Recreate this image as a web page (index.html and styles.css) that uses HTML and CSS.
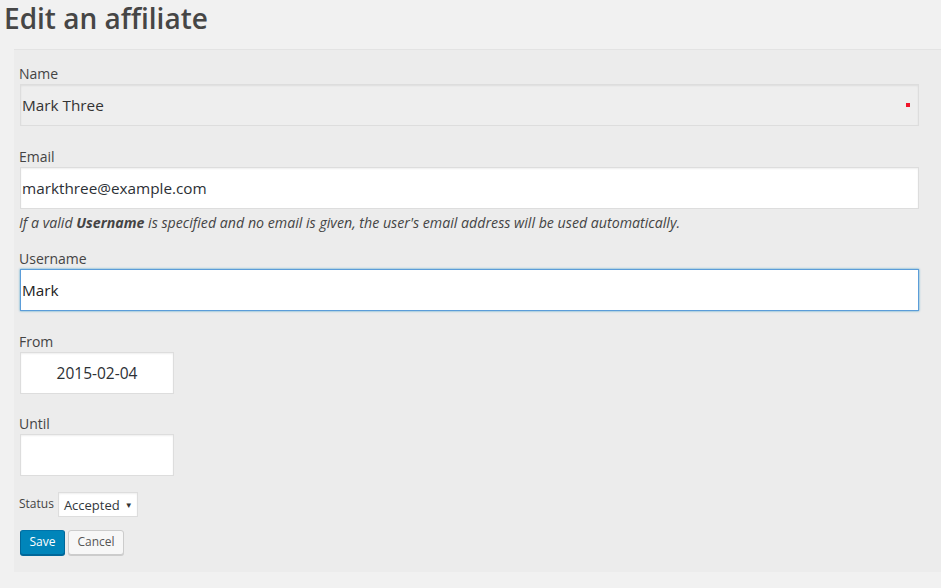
FILE: index.html
```html
<!DOCTYPE html>
<html>
<head>
<meta charset="utf-8">
<link rel="stylesheet" href="styles.css">
</head>
<body>
<h1 class="title">Edit an affiliate</h1>
<form class="panel">
  <div class="field field-name">
    <label class="label">Name</label>
    <div class="input-wrap">
      <input class="input input-readonly" type="text" value="Mark Three">
      <span class="req-dot"></span>
    </div>
  </div>
  <div class="field field-email">
    <label class="label">Email</label>
    <input class="input" type="text" value="markthree@example.com">
    <p class="desc">If a valid <b>Username</b> is specified and no email is given, the user's email address will be used automatically.</p>
  </div>
  <div class="field field-username">
    <label class="label">Username</label>
    <input class="input input-focus" type="text" value="Mark">
  </div>
  <div class="field">
    <label class="label">From</label>
    <input class="input input-date" type="text" value="2015-02-04">
  </div>
  <div class="field field-until">
    <label class="label">Until</label>
    <input class="input input-date" type="text" value="">
  </div>
  <div class="status-row">
    <span class="status-label">Status</span>
    <div class="select">Accepted <span class="caret">▼</span></div>
  </div>
  <div class="buttons">
    <button type="button" class="btn btn-primary">Save</button>
    <button type="button" class="btn btn-secondary">Cancel</button>
  </div>
</form>
</body>
</html>
```

FILE: styles.css
```css
html, body {
  margin: 0;
  padding: 0;
  background: #f1f1f1;
  font-family: "Open Sans", "Noto Sans", sans-serif;
  color: #444;
}

.title {
  margin: 0 0 13px 0;
  padding: 0 0 0 4px;
  font-size: 28px;
  line-height: 36px;
  font-weight: 600;
  color: #464646;
}

.panel {
  margin: 0 0 0 14px;
  padding: 14px 22px 17px 6px;
  background: #ececec;
  border-top: 1px solid #e3e3e3;
}

.field {
  margin-bottom: 20px;
}

.field-name,
.field-username {
  margin-bottom: 21px;
}

.field-email {
  margin-bottom: 16px;
}

.field-until {
  margin-bottom: 16px;
}

.label {
  display: block;
  font-size: 14px;
  line-height: 20px;
  color: #444;
  margin-left: -1px;
}

.input-wrap {
  position: relative;
}

.input {
  display: block;
  box-sizing: border-box;
  width: 100%;
  height: 42px;
  margin: 0;
  padding: 0 1px;
  font-family: "Open Sans", "Noto Sans", sans-serif;
  font-size: 15.3px;
  color: #2c3035;
  background: #fff;
  border: 1px solid #ddd;
  box-shadow: inset 0 1px 2px rgba(0, 0, 0, 0.07);
  outline: none;
}

.input-readonly {
  background: #eee;
  border-color: #ddd;
  color: #333;
}

.input-focus {
  border-color: #5b9dd9;
  box-shadow: 0 0 2px rgba(30, 140, 190, 0.8);
  color: #222;
}

.input-date {
  width: 154px;
  text-align: center;
  font-size: 15.5px;
}

.req-dot {
  position: absolute;
  right: 9px;
  top: 19px;
  width: 4px;
  height: 4px;
  background: #f0142a;
}

.desc {
  margin: 4px 0 0 -1px;
  font-size: 14.2px;
  line-height: 20px;
  font-style: italic;
  color: #444;
}

.desc b {
  font-weight: 700;
}

.status-row {
  display: flex;
  align-items: center;
  gap: 4px;
  margin-bottom: 13px;
}

.status-label {
  font-size: 12px;
  color: #444;
  margin-left: -1px;
  margin-top: -2px;
}

.select {
  box-sizing: border-box;
  height: 25px;
  width: 80px;
  display: flex;
  align-items: center;
  padding: 0 0 0 5px;
  background: #fff;
  border: 1px solid #ddd;
  box-shadow: inset 0 1px 2px rgba(0, 0, 0, 0.07);
  font-size: 13px;
  color: #32373c;
}

.caret {
  font-size: 8px;
  margin-left: 5px;
  color: #333;
}

.buttons {
  display: flex;
  gap: 3px;
}

.btn {
  box-sizing: border-box;
  height: 25px;
  padding: 0 8px 1px;
  font-family: "Open Sans", "Noto Sans", sans-serif;
  font-size: 12px;
  line-height: 22px;
  border-radius: 3px;
  border: 1px solid;
  cursor: pointer;
}

.btn-primary {
  width: 45px;
  background: #0085ba;
  border-color: #0073aa #006799 #006799;
  box-shadow: 0 1px 0 #006799;
  color: #fff;
}

.btn-secondary {
  width: 56px;
  background: #f7f7f7;
  border-color: #ccc;
  box-shadow: 0 1px 0 #ccc;
  color: #555;
}
```
